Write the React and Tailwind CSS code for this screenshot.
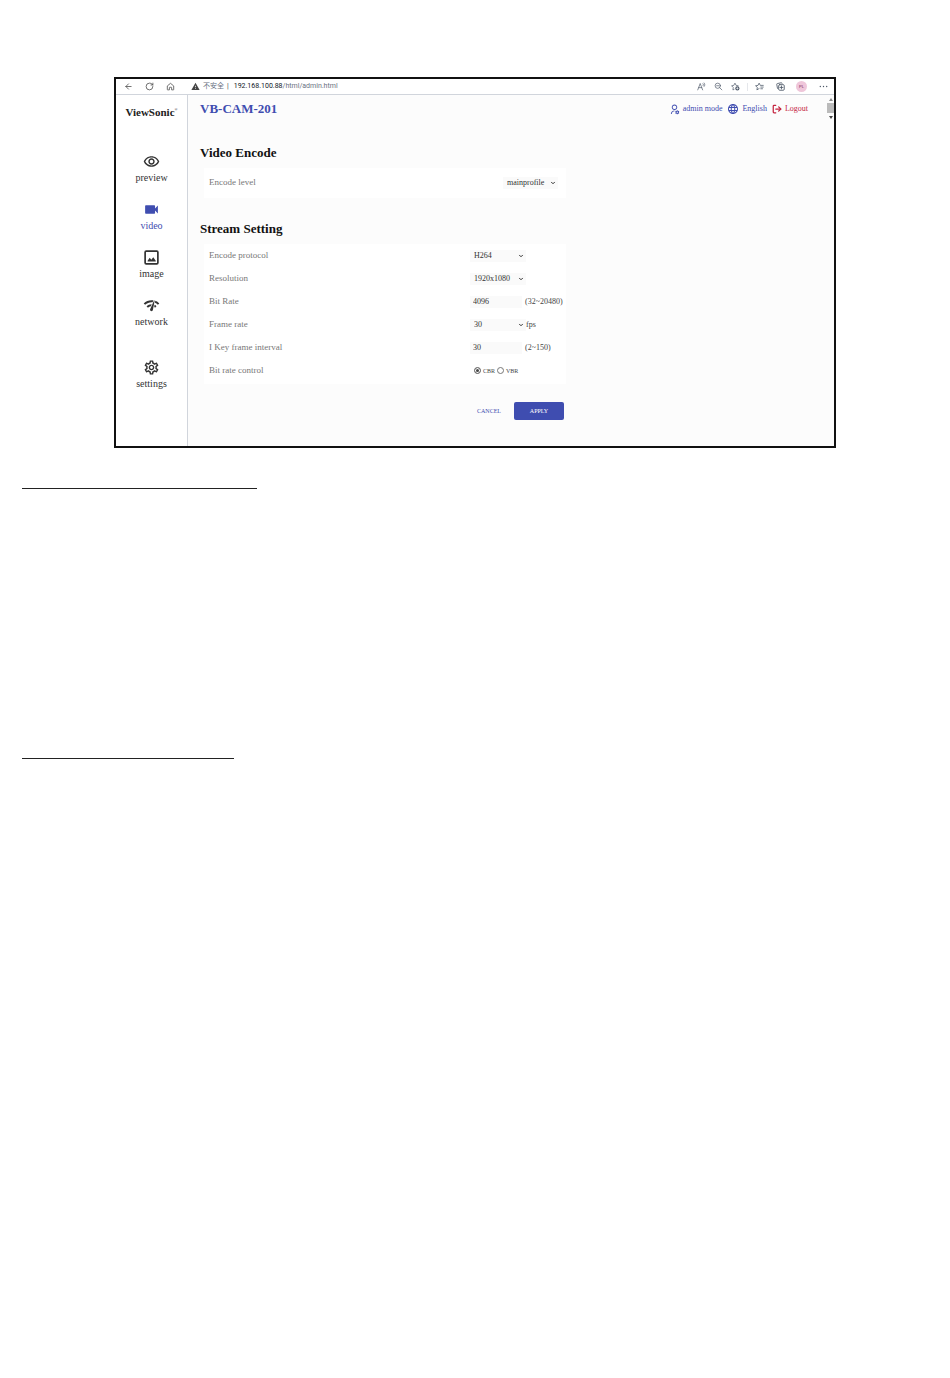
import React, { useState } from 'react';
import { ArrowLeft, ChevronDown, LogOut, RotateCw } from 'lucide-react';
import {
  MdLanguage,
  MdNetworkCheck,
  MdOutlineRemoveRedEye,
  MdOutlineSettings,
  MdVideocam,
  MdWarning,
} from 'react-icons/md';
import { RiUserSettingsLine } from 'react-icons/ri';

const ImageIcon = ({ className }) => (
  <svg viewBox="0 0 24 24" fill="none" stroke="currentColor" strokeWidth="2.4" className={className} aria-hidden="true">
    <rect x="3" y="3" width="18" height="18" rx="1.5" />
    <path d="M6.5 17.5v-1l3-4 2.2 2.6 2.8-3.6 3.5 5v1z" fill="currentColor" stroke="none" />
  </svg>
);

const HomeIcon = ({ className }) => (
  <svg viewBox="0 0 24 24" fill="none" stroke="currentColor" strokeWidth="2" strokeLinejoin="round" className={className} aria-hidden="true">
    <path d="M3.5 10.5 12 3.5l8.5 7V20a1 1 0 0 1-1 1H15v-6a1 1 0 0 0-1-1h-4a1 1 0 0 0-1 1v6H4.5a1 1 0 0 1-1-1z" />
  </svg>
);

const ReadAloudIcon = ({ className }) => (
  <svg viewBox="0 0 24 24" fill="none" stroke="currentColor" strokeWidth="1.8" strokeLinecap="round" className={className} aria-hidden="true">
    <path d="M2 21 8.5 4 15 21M4.5 15h8M16 4.5c1.5 1.5 1.5 4 0 5.5M19 2.5c2.5 2.8 2.5 6.7 0 9.5" />
  </svg>
);

const ZoomOutIcon = ({ className }) => (
  <svg viewBox="0 0 24 24" fill="none" stroke="currentColor" strokeWidth="1.8" strokeLinecap="round" className={className} aria-hidden="true">
    <circle cx="10" cy="10" r="7" />
    <path d="M7 10h6M15.2 15.2 21 21" />
  </svg>
);

const AddFavoriteIcon = ({ className }) => (
  <svg viewBox="0 0 24 24" fill="none" stroke="currentColor" strokeWidth="1.8" strokeLinejoin="round" className={className} aria-hidden="true">
    <path d="M9 19.5 5 21l1-6.5L1.5 10l6-1L10.5 3l3 6 6.5 1" />
    <circle cx="17" cy="17" r="5.5" fill="currentColor" stroke="none" />
    <path d="M17 14v6M14 17h6" stroke="white" />
  </svg>
);

const FavoritesIcon = ({ className }) => (
  <svg viewBox="0 0 24 24" fill="none" stroke="currentColor" strokeWidth="2" strokeLinecap="round" strokeLinejoin="round" className={className} aria-hidden="true">
    <path d="M11 17.5 5 21l1.3-6.5L1.5 10l6.500-1 3-6 3 6h8M15.5 13.5H22M15.5 18H20" />
  </svg>
);

const CollectionsIcon = ({ className }) => (
  <svg viewBox="0 0 24 24" fill="none" stroke="currentColor" strokeWidth="2.2" strokeLinecap="round" className={className} aria-hidden="true">
    <path d="M4 17 2 6.5A2 2 0 0 1 3.6 4.2L14 2a2 2 0 0 1 2.3 1.6" />
    <rect x="7" y="7" width="15" height="15" rx="3" />
    <path d="M14.5 10.5v8M10.500 14.5h8" />
  </svg>
);

const NAV_ITEMS = [
  { id: 'preview', icon: MdOutlineRemoveRedEye },
  { id: 'video', icon: MdVideocam },
  { id: 'image', icon: ImageIcon },
  { id: 'network', icon: MdNetworkCheck },
];

const BrowserBar = () => (
  <div className="flex h-4 items-center border-b border-gray-300 bg-white pr-[6px] pl-2 text-[#444]">
    <div className="flex items-center gap-3">
      <button type="button" aria-label="Back"><ArrowLeft className="size-[9px]" /></button>
      <button type="button" aria-label="Refresh"><RotateCw className="size-[9px]" /></button>
      <button type="button" aria-label="Home"><HomeIcon className="size-[9px]" /></button>
    </div>
    <div className="ml-4 flex items-center gap-[3px] font-['Roboto','Noto_Sans_CJK_SC',sans-serif] text-[7px] leading-none">
      <MdWarning className="size-[9px]" />
      <span className="text-gray-500">不安全</span>
      <span>|</span>
      <span className="ml-[2px] text-gray-500"><span className="text-gray-900">192.168.100.88</span>/html/admin.html</span>
    </div>
    <div className="ml-auto flex items-center gap-2 text-gray-600">
      <button type="button" aria-label="Read aloud"><ReadAloudIcon className="size-[9px]" /></button>
      <button type="button" aria-label="Zoom out"><ZoomOutIcon className="size-[9px]" /></button>
      <button type="button" aria-label="Add to favorites"><AddFavoriteIcon className="size-[9px]" /></button>
      <span className="-mx-px h-2 w-px bg-gray-200" />
      <button type="button" aria-label="Favorites"><FavoritesIcon className="size-[9px]" /></button>
      <button type="button" aria-label="Collections" className="ml-1"><CollectionsIcon className="size-[9px]" /></button>
      <button type="button" className="ml-[3px] size-[11px] rounded-full bg-[#efc6da] font-['Liberation_Sans',sans-serif] text-[4px] leading-none text-[#7a2454]">PL</button>
      <button type="button" aria-label="More" className="ml-1">
        <svg viewBox="0 0 24 24" fill="currentColor" className="size-[9px]" aria-hidden="true">
          <circle cx="3.5" cy="12" r="1.8" />
          <circle cx="12" cy="12" r="1.8" />
          <circle cx="20.5" cy="12" r="1.8" />
        </svg>
      </button>
    </div>
  </div>
);

const NavItem = ({ id, icon: Icon, active, onClick }) => (
  <button
    type="button"
    onClick={() => onClick(id)}
    className={`flex h-12 flex-col items-center text-[10px] leading-4 ${active ? 'text-[#3f4db0]' : 'text-[#333]'}`}
  >
    <Icon className="size-[17px]" />
    {id}
  </button>
);

const Sidebar = ({ page, onSelect }) => (
  <nav className="flex w-[72px] shrink-0 flex-col items-center border-r border-gray-300 bg-white">
    <div className="mt-[9px] flex h-[49px] items-start text-[11px] leading-4 font-bold text-[#222]">
      ViewSonic<span className="text-[4px] leading-3 font-normal">®</span>
    </div>
    {NAV_ITEMS.map(item => (
      <NavItem key={item.id} {...item} active={page === item.id} onClick={onSelect} />
    ))}
    <div className="mt-[14px]">
      <NavItem id="settings" icon={MdOutlineSettings} active={page === 'settings'} onClick={onSelect} />
    </div>
  </nav>
);

const Select = ({ id, options, width }) => (
  <div className={`relative ${width}`}>
    <select id={id} className="block h-3 w-full appearance-none bg-[#fafafa] pl-1 text-[8px] leading-3 text-[#333]">
      {options.map(option => (
        <option key={option}>{option}</option>
      ))}
    </select>
    <ChevronDown strokeWidth={4} className="pointer-events-none absolute top-[3px] right-[2px] size-[6px] text-[#333]" />
  </div>
);

const Row = ({ label, htmlFor, children }) => (
  <div className="flex h-[23px] items-center">
    <label htmlFor={htmlFor} className="flex-1 text-[9px] text-[#777]">{label}</label>
    <div className="flex w-[92px] items-center text-[8px] leading-3 text-[#444]">{children}</div>
  </div>
);

const NumberField = ({ id, value, hint }) => (
  <>
    <input id={id} type="text" defaultValue={value} className="h-3 w-[52px] bg-[#fafafa] pl-[3px] text-[8px] text-[#333]" />
    <span className="ml-[3px]">{hint}</span>
  </>
);

const Radio = ({ id, label, checked, onChange }) => (
  <>
    <input
      id={id}
      type="radio"
      name="rateControl"
      checked={checked}
      onChange={onChange}
      className="size-[7px] appearance-none rounded-full border border-[#777] bg-white checked:bg-[#444] checked:shadow-[inset_0_0_0_1px_white]"
    />
    <label htmlFor={id} className="mr-[2px] ml-[2px] text-[6px]">{label}</label>
  </>
);

const VideoForm = () => {
  const [rateControl, setRateControl] = useState('CBR');

  return (
    <form className="w-full max-w-[366px]" onSubmit={e => e.preventDefault()}>
      <h2 className="mt-6 text-[13px] leading-5 font-bold text-[#111]">Video Encode</h2>
      <div className="mt-[5px] ml-1 flex h-[30px] items-center bg-white pr-2 pl-[5px]">
        <label htmlFor="level" className="flex-1 text-[9px] text-[#777]">Encode level</label>
        <Select id="level" options={['mainprofile', 'baseline', 'highprofile']} width="w-[55px]" />
      </div>

      <h2 className="mt-[21px] text-[13px] leading-5 font-bold text-[#111]">Stream Setting</h2>
      <div className="mt-[5px] ml-1 bg-white pr-1 pb-[2px] pl-[5px]">
        <Row label="Encode protocol" htmlFor="protocol">
          <Select id="protocol" options={['H264', 'H265']} width="w-[56px]" />
        </Row>
        <Row label="Resolution" htmlFor="resolution">
          <Select id="resolution" options={['1920x1080', '1280x720']} width="w-[56px]" />
        </Row>
        <Row label="Bit Rate" htmlFor="bitrate">
          <NumberField id="bitrate" value="4096" hint="(32~20480)" />
        </Row>
        <Row label="Frame rate" htmlFor="framerate">
          <Select id="framerate" options={['30', '25']} width="w-[56px]" />
          <span>fps</span>
        </Row>
        <Row label="I Key frame interval" htmlFor="interval">
          <NumberField id="interval" value="30" hint="(2~150)" />
        </Row>
        <Row label="Bit rate control" htmlFor="cbr">
          <div className="flex items-center pl-1">
            <Radio id="cbr" label="CBR" checked={rateControl === 'CBR'} onChange={() => setRateControl('CBR')} />
            <Radio id="vbr" label="VBR" checked={rateControl === 'VBR'} onChange={() => setRateControl('VBR')} />
          </div>
        </Row>
      </div>

      <div className="mt-[18px] mr-[2px] flex justify-end text-[6px] leading-none">
        <button type="reset" className="h-[18px] w-[50px] text-[#3f4db0]">CANCEL</button>
        <button type="submit" className="h-[18px] w-[50px] rounded-[2px] bg-[#3f4db0] text-white">APPLY</button>
      </div>
    </form>
  );
};

const App = () => {
  const [page, setPage] = useState('video');

  return (
    <div className="bg-white pt-[77px] font-['Liberation_Serif',serif]">
      <div className="mx-[12%] border-2 border-[#111]">
        <BrowserBar />
        <div className="flex min-h-[351px]">
          <Sidebar page={page} onSelect={setPage} />
          <main className="min-w-0 flex-1 bg-[#fcfcfc] pl-3">
            <header className="flex items-center pt-1 pr-[19px]">
              <h1 className="flex-1 text-[13px] leading-5 font-bold text-[#3f4db0]">VB-CAM-201</h1>
              <div className="flex items-center gap-[5px] text-[8px] leading-3 text-[#3f4db0]">
                <a href="#admin" className="flex items-center gap-[3px]"><RiUserSettingsLine className="size-[11px]" />admin mode</a>
                <a href="#language" className="flex items-center gap-[3px]"><MdLanguage className="size-3" />English</a>
                <a href="#logout" className="flex items-center gap-[3px] text-[#c4233f]"><LogOut strokeWidth={3} className="size-[10px]" />Logout</a>
              </div>
            </header>
            <VideoForm />
          </main>
          {/* scroll bar stub */}
          <div className="flex w-[7px] flex-col items-center bg-[#fcfcfc] pt-[3px]">
            <svg viewBox="0 0 4 3" className="h-[3px] w-1" aria-hidden="true"><path d="M0 3 2 0l2 3z" fill="#888" /></svg>
            <div className="mt-[2px] h-[10px] w-full bg-[#bbb]" />
            <svg viewBox="0 0 4 3" className="mt-[3px] h-[3px] w-1" aria-hidden="true"><path d="M0 0h4L2 3z" fill="#444" /></svg>
          </div>
        </div>
      </div>
      <hr className="mt-10 ml-[22px] w-[235px] border-[#222]" />
      <hr className="mt-[269px] ml-[22px] w-[212px] border-[#222]" />
    </div>
  );
};

export default App;
